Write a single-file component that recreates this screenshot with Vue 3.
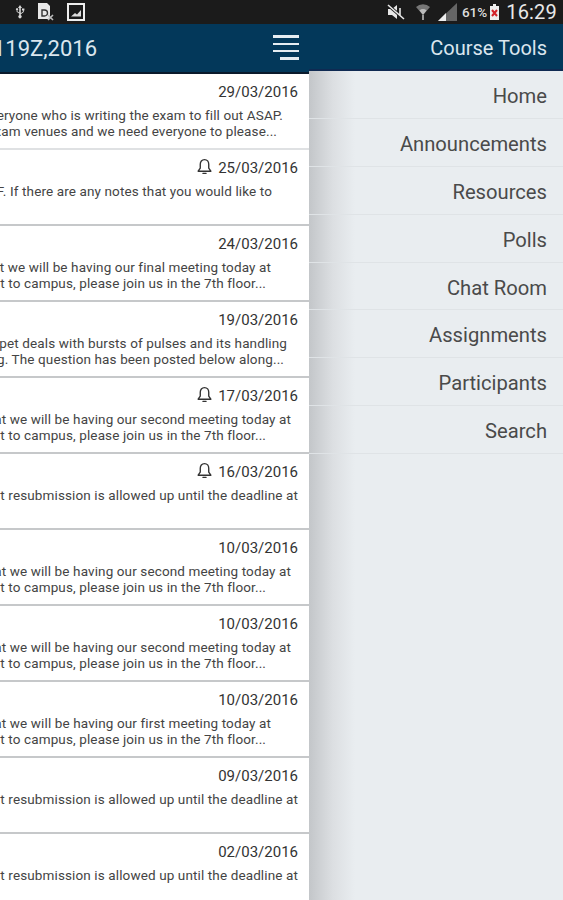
<script setup>
const rows = [
  { date: '29/03/2016', lines: [{ t: 'Please, we need everyone who is writing the exam to fill out ASAP.', e: 283 }, { t: 'We are confirming exam venues and we need everyone to please...', e: 277 }] },
  { date: '25/03/2016', bell: true, lines: [{ t: 'The notes are now available as a PDF. If there are any notes that you would like to', e: 272 }] },
  { date: '24/03/2016', lines: [{ t: 'Please be advised that we will be having our final meeting today at', e: 271 }, { t: '14:00. If you cannot commit to campus, please join us in the 7th floor...', e: 266 }] },
  { date: '19/03/2016', lines: [{ t: 'This part of the trumpet deals with bursts of pulses and its handling', e: 287 }, { t: 'of the signal handling. The question has been posted below along...', e: 284 }] },
  { date: '17/03/2016', bell: true, lines: [{ t: 'Please be advised that we will be having our second meeting today at', e: 291 }, { t: '14:00. If you cannot commit to campus, please join us in the 7th floor...', e: 266 }] },
  { date: '16/03/2016', bell: true, lines: [{ t: 'Please be advised that resubmission is allowed up until the deadline at', e: 298 }] },
  { date: '10/03/2016', lines: [{ t: 'Please be advised that we will be having our second meeting today at', e: 291 }, { t: '14:00. If you cannot commit to campus, please join us in the 7th floor...', e: 266 }] },
  { date: '10/03/2016', lines: [{ t: 'Please be advised that we will be having our second meeting today at', e: 291 }, { t: '14:00. If you cannot commit to campus, please join us in the 7th floor...', e: 266 }] },
  { date: '10/03/2016', lines: [{ t: 'Please be advised that we will be having our first meeting today at', e: 271 }, { t: '14:00. If you cannot commit to campus, please join us in the 7th floor...', e: 266 }] },
  { date: '09/03/2016', lines: [{ t: 'Please be advised that resubmission is allowed up until the deadline at', e: 298 }] },
  { date: '02/03/2016', lines: [{ t: 'Please be advised that resubmission is allowed up until the deadline at', e: 298 }] },
]
const tools = ['Home', 'Announcements', 'Resources', 'Polls', 'Chat Room', 'Assignments', 'Participants', 'Search']
</script>

<template>
  <div class="screen">
    <header class="status">
      <div class="status-left">
        <svg width="10" height="14" viewBox="0 0 10 14"><path d="M5 0 7 3H5.8v5.2L8 6.6V5.4H7V3.6h2.4v1.8h-.6v1.6L5.8 9.2v1.1a1.6 1.6 0 1 1-1.6 0V8.6L1.6 6.8V5.2a1.1 1.1 0 1 1 .9 0v1.2l1.700 1.200V3H3z" fill="#d8d8d8"/></svg>
        <svg width="18" height="20" viewBox="0 0 18 20"><path d="M1 1h9l3 3v13H1z" fill="#e8e8e8"/><path d="M5 8h2.500a2.500 2.500 0 0 1 0 6H5z" fill="none" stroke="#333" stroke-width="1.400"/><path d="m11 13 5 5m0-5-5 5" stroke="#bbb" stroke-width="1.600"/></svg>
        <svg width="18" height="18" viewBox="0 0 18 18"><rect x="1" y="1" width="16" height="16" fill="none" stroke="#eee" stroke-width="2"/><path d="M4 13.500 8 10l2 1.500L14 7v6.500z" fill="#ddd"/></svg>
      </div>
      <div class="status-right">
        <svg width="18" height="16" viewBox="0 0 18 16"><path d="M1 5h4l5-4v14l-5-4H1z" fill="#e8e8e8"/><path d="m1 1 16 14" stroke="#1c1c1c" stroke-width="3"/><path d="m1 1 16 14M13 4v8" stroke="#e8e8e8" stroke-width="1.600"/></svg>
        <svg class="wifi" width="16" height="17" viewBox="0 0 16 17"><path d="M1 3a10 10 0 0 1 14 0L8 11z" fill="#777"/><path d="M4.500 6.500a5 5 0 0 1 7 0L8 11z" fill="#bbb"/><path d="M7 11h2v5H7z" fill="#999"/></svg>
        <svg class="signal" width="19" height="18" viewBox="0 0 19 18"><path d="M19 0v18H0z" fill="#666"/><path d="M8 10v8H0z" fill="#eee"/></svg>
        <span class="pct">61%</span>
        <svg class="battery" width="9" height="16" viewBox="0 0 9 16"><path d="M3 0h3v2h3v14H0V2h3z" fill="#eee"/><path d="m2 6 5 6m0-6-5 6" stroke="#d3232a" stroke-width="2"/></svg>
        <span class="clock">16:29</span>
      </div>
    </header>

    <div class="body">
      <section class="list-panel">
        <div class="list-head">
          <span class="course">ELEN5119Z,2016</span>
          <div class="burger"><i></i><i></i><i></i><i class="short"></i></div>
        </div>
        <article v-for="(r, i) in rows" :key="i" class="row">
          <div class="date-line">
            <svg v-if="r.bell" class="bell" width="17" height="18" viewBox="0 0 16 17"><path d="M8 1.500c-2.600 0-4 2-4 4.500v3.500L2 12.500h12l-2-3V6c0-2.500-1.400-4.500-4-4.500ZM6.500 14.500h3" fill="none" stroke="#333" stroke-width="1.300" stroke-linejoin="round" stroke-linecap="round"/></svg>
            <span>{{ r.date }}</span>
          </div>
          <div v-for="(l, j) in r.lines" :key="j" class="msg" :style="{ width: l.e + 'px' }">
            <span>{{ l.t }}</span>
          </div>
        </article>
      </section>

      <aside class="tools">
        <div class="tools-head">Course Tools</div>
        <nav>
          <a v-for="t in tools" :key="t" class="tool">{{ t }}</a>
        </nav>
      </aside>
    </div>
  </div>
</template>

<style>
html, body { margin: 0; background: #fff; }
</style>

<style scoped>
.screen {
  width: 563px;
  height: 900px;
  overflow: hidden;
  display: flex;
  flex-direction: column;
  font-family: Roboto, "Liberation Sans", sans-serif;
}
.status {
  height: 24px;
  flex: none;
  background: #1b1b1b;
  display: flex;
  justify-content: space-between;
  align-items: center;
  color: #e8e8e8;
}
.status-left {
  display: flex;
  align-items: center;
  gap: 12px;
  padding-left: 15px;
}
.status-right {
  display: flex;
  align-items: center;
  padding-right: 6px;
}
.wifi { margin-left: 10px; }
.signal { margin-left: 7px; }
.pct { font-size: 13.500px; font-weight: 500; margin-left: 5px; color: #ddd; }
.battery { margin-left: 3px; }
.clock { font-size: 20px; margin-left: 7px; letter-spacing: 0.2px; }
.body {
  flex: 1;
  min-height: 0;
  display: flex;
}
.list-panel {
  width: 309px;
  flex: none;
  overflow: hidden;
  background: #fff;
}
.list-head {
  height: 48px;
  border-bottom: 2px solid #0a1a2c;
  background: #03385a;
  display: flex;
  justify-content: flex-end;
  align-items: center;
  gap: 9px;
  padding-right: 10px;
  overflow: hidden;
}
.course {
  color: #dbe6ee;
  font-size: 22px;
  white-space: nowrap;
  flex: none;
  margin-right: 167px;
}
.burger {
  width: 26px;
  display: flex;
  flex-direction: column;
  align-items: flex-end;
  gap: 4.800px;
  margin-top: -1px;
}
.burger i {
  display: block;
  width: 26px;
  height: 2.500px;
  background: #e6edf2;
}
.burger i.short { width: 19px; }
.row {
  height: 76px;
  box-sizing: border-box;
  border-bottom: 2px solid #c6c8ca;
  padding-top: 9px;
}
.row:first-of-type { border-bottom-color: #dfe1e3; }
.date-line {
  display: flex;
  justify-content: flex-end;
  align-items: center;
  gap: 5px;
  height: 18px;
  padding-right: 11px;
  margin-bottom: 6px;
  font-size: 15px;
  color: #333;
}
.bell { margin-top: -3px; }
.msg {
  display: flex;
  justify-content: flex-end;
  height: 16px;
  line-height: 16px;
  font-size: 13.500px;
  letter-spacing: 0.12px;
  color: #444;
  white-space: nowrap;
}
.msg span { flex: none; }
.tools {
  flex: 1;
  background: linear-gradient(90deg, #c3c6c9 0, #dcdfe2 24px, #e9edf0 46px);
}
.tools-head {
  height: 45px;
  border-bottom: 2px solid #0f2a52;
  background: #03385a;
  color: #dbe6ee;
  font-size: 20px;
  line-height: 48px;
  text-align: right;
  padding-right: 16px;
}
.tool {
  display: block;
  height: 47.900px;
  box-sizing: border-box;
  border-bottom: 1px solid #dfe3e6;
  text-align: right;
  padding-right: 16px;
  line-height: 50px;
  font-size: 20.200px;
  color: #4a4a4a;
}
</style>
